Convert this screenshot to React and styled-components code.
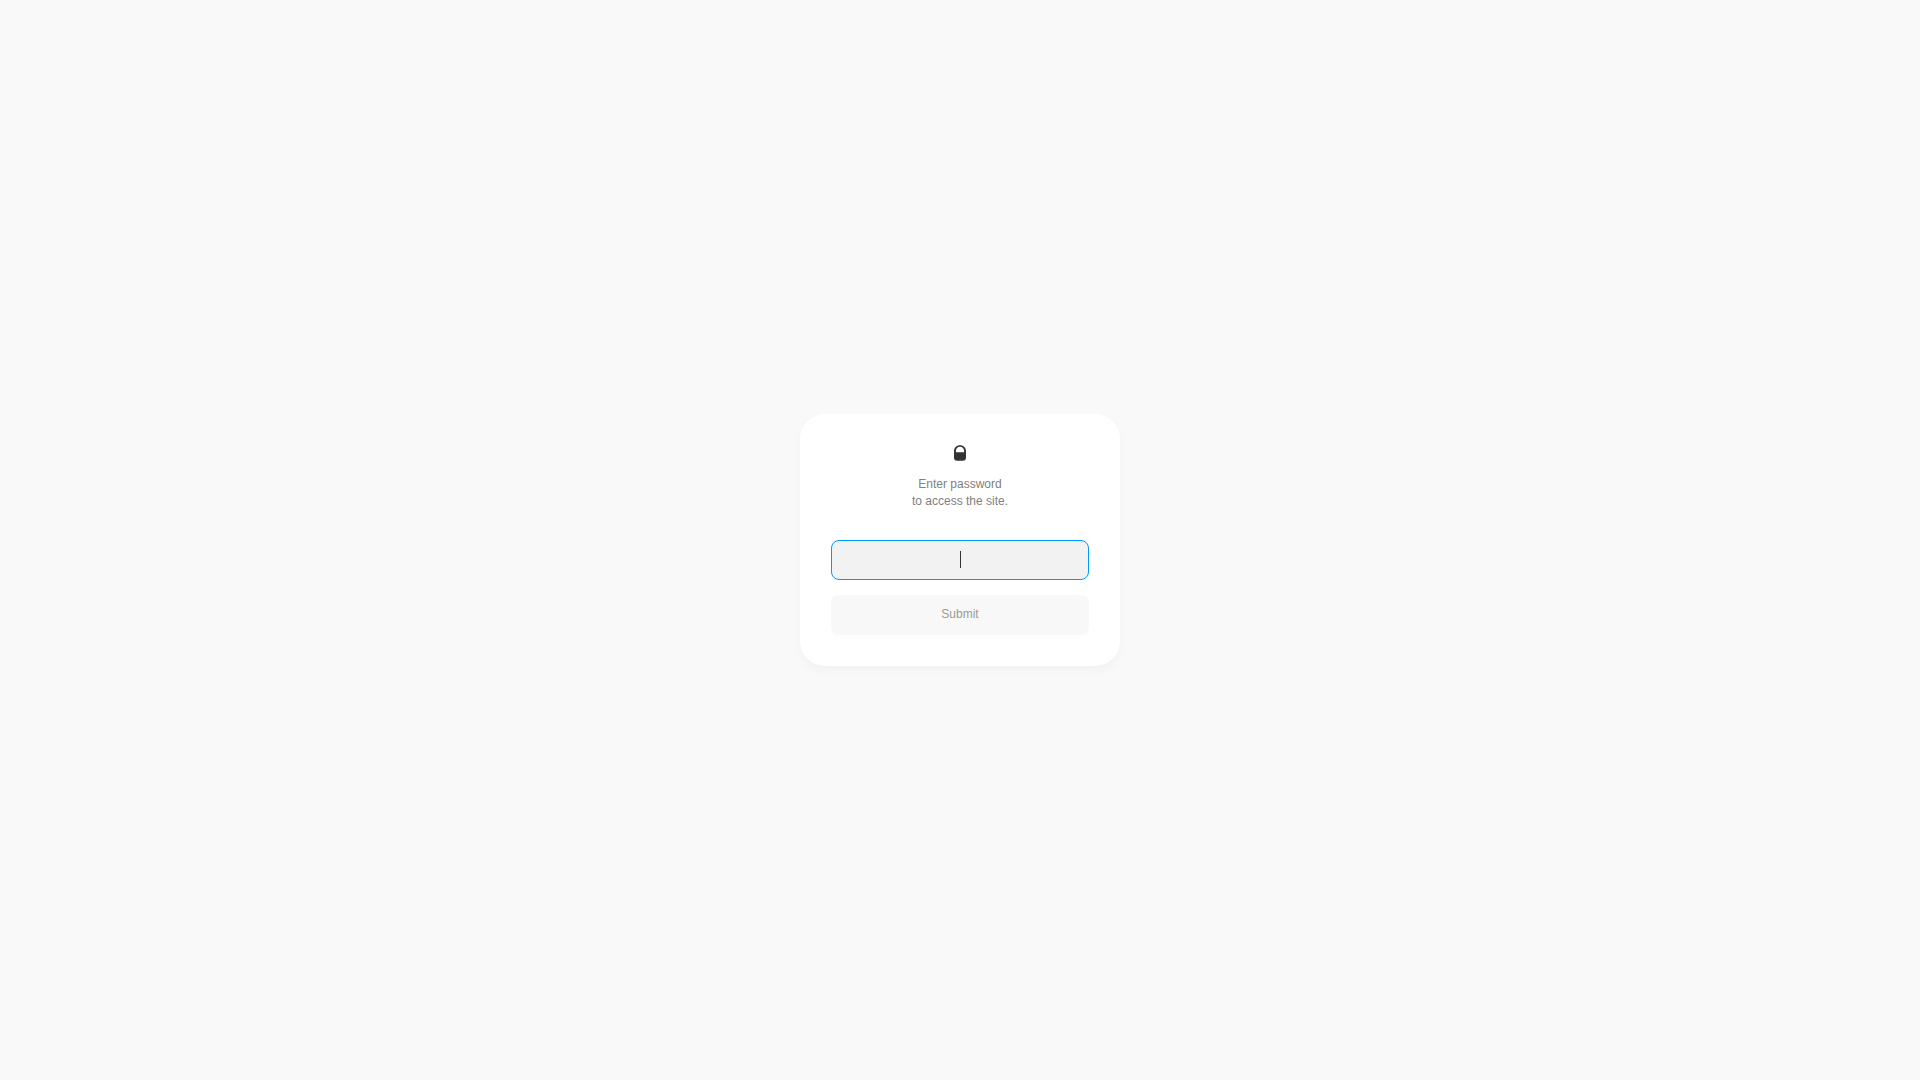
import React, { useState } from "react";
import styled, { createGlobalStyle } from "styled-components";

const GlobalStyle = createGlobalStyle`
  * {
    box-sizing: border-box;
  }
  body {
    margin: 0;
    background-color: #f9f9f9;
    font-family: "Liberation Sans", Arial, sans-serif;
  }
`;

const Page = styled.main`
  min-height: 100vh;
  display: flex;
  align-items: center;
  justify-content: center;
`;

const Card = styled.form`
  width: 100%;
  max-width: 320px;
  padding: 31px;
  display: flex;
  flex-direction: column;
  align-items: center;
  background-color: #fff;
  border-radius: 25px;
  box-shadow: 0 5px 10px rgba(0, 0, 0, 0.03);
`;

const LockIcon = styled.svg`
  display: block;
  width: 12px;
  height: 16px;
`;

const Message = styled.label`
  margin: 15px 0 30px;
  color: #808080;
  font-size: 12px;
  line-height: 17px;
  text-align: center;
`;

const Field = styled.div`
  position: relative;
  width: 100%;
  display: flex;
`;

const PasswordInput = styled.input`
  width: 100%;
  height: 40px;
  padding: 0 10px;
  border: 1px solid #0099ff;
  border-radius: 8px;
  outline: none;
  background-color: #f2f2f2;
  color: #333;
  caret-color: ${(props) => (props.value ? "#333" : "transparent")};
  font-family: inherit;
  font-size: 15px;
  text-align: center;
`;

// steady caret while the field is empty
const Caret = styled.span`
  position: absolute;
  top: 11px;
  left: 50%;
  width: 1px;
  height: 17px;
  background-color: #333;
  pointer-events: none;
`;

const SubmitBtn = styled.button`
  width: 100%;
  height: 40px;
  margin-top: 15px;
  padding: 0 0 2px;
  border: none;
  border-radius: 8px;
  background-color: #f2f2f2;
  color: #333;
  font-family: inherit;
  font-size: 12px;
  line-height: 17px;
  cursor: pointer;
  opacity: ${(props) => (props.$dimmed ? 0.5 : 1)};
`;

const App = () => {
  const [password, setPassword] = useState("");

  return (
    <Page>
      <GlobalStyle />
      <Card onSubmit={(e) => e.preventDefault()}>
        <LockIcon viewBox="0 0 12 16" aria-hidden="true">
          <path
            d="M0 6.3C0 2.7 2.5 0.3 6 0.3S12 2.7 12 6.3V12.6C12 14.8 10.8 15.8 8.8 15.8H3.2C1.2 15.8 0 14.8 0 12.6ZM1.9 7.2H10.1V6C10.1 3.4 8.4 1.8 6 1.8S1.9 3.4 1.9 6Z"
            fill="#333"
            fillRule="evenodd"
          />
        </LockIcon>
        <Message htmlFor="password">
          Enter password
          <br />
          to access the site.
        </Message>
        <Field>
          <PasswordInput
            id="password"
            type="password"
            value={password}
            onChange={(e) => setPassword(e.target.value)}
            autoFocus
          />
          {!password && <Caret />}
        </Field>
        <SubmitBtn type="submit" $dimmed={!password}>
          Submit
        </SubmitBtn>
      </Card>
    </Page>
  );
};

export default App;
